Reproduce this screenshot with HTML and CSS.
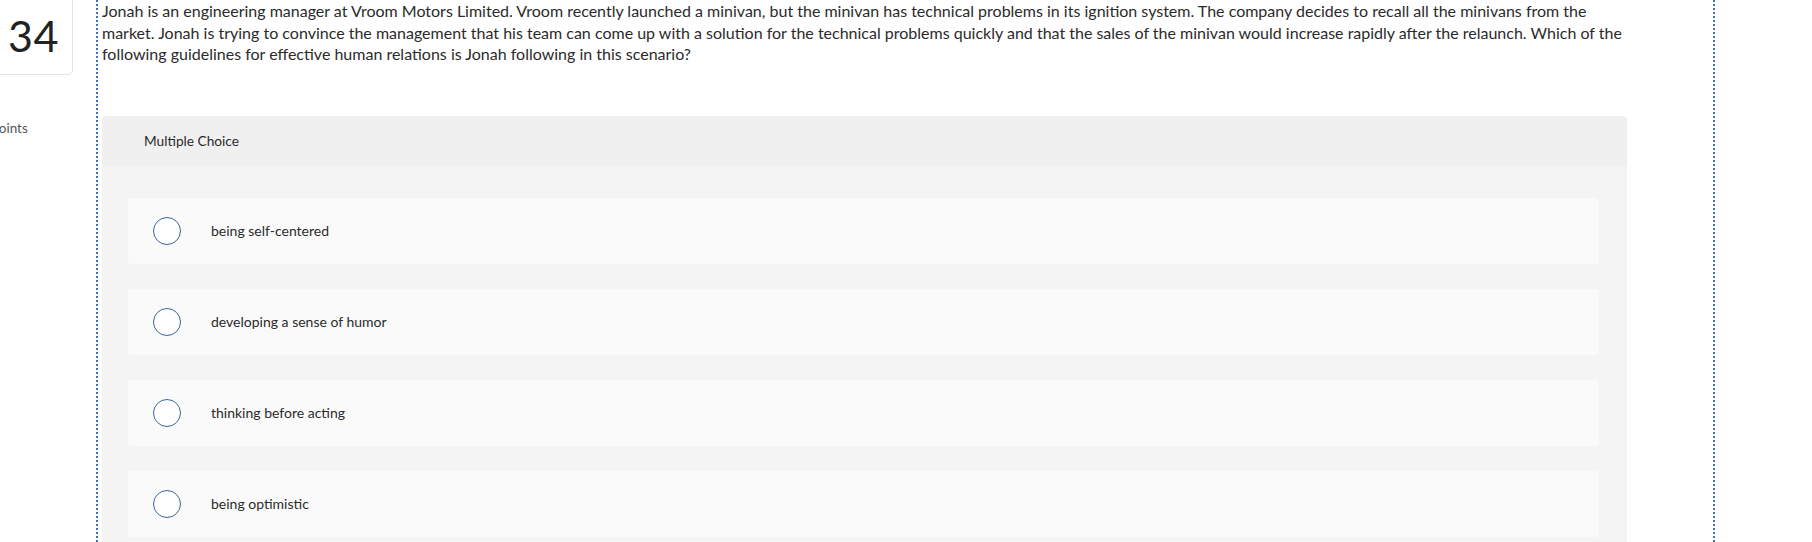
FILE: index.html
```html
<!DOCTYPE html>
<html lang="en">
<head>
<meta charset="utf-8">
<title>Question 34</title>
<link rel="stylesheet" href="styles.css">
</head>
<body>
<div class="page">
  <aside class="sidebar">
    <div class="qnum">34</div>
    <div class="points">Points</div>
  </aside>
  <main class="question">
    <p class="prompt">Jonah is an engineering manager at Vroom Motors Limited. Vroom recently launched a minivan, but the minivan has technical problems in its ignition system. The company decides to recall all the minivans from the market. Jonah is trying to convince the management that his team can come up with a solution for the technical problems quickly and that the sales of the minivan would increase rapidly after the relaunch. Which of the following guidelines for effective human relations is Jonah following in this scenario?</p>
    <section class="panel">
      <div class="panel-head">Multiple Choice</div>
      <div class="panel-body">
        <label class="option"><span class="radio"></span><span class="opt-text">being self-centered</span></label>
        <label class="option"><span class="radio"></span><span class="opt-text">developing a sense of humor</span></label>
        <label class="option"><span class="radio"></span><span class="opt-text">thinking before acting</span></label>
        <label class="option"><span class="radio"></span><span class="opt-text">being optimistic</span></label>
      </div>
    </section>
  </main>
</div>
</body>
</html>
```
FILE: styles.css
```css
* { box-sizing: border-box; }
html, body {
  margin: 0;
  padding: 0;
  background: #fff;
  overflow: hidden;
}
body {
  font-family: Lato, "Open Sans", sans-serif;
  color: #2b2b2b;
  width: 1812px;
  height: 542px;
}
.page {
  display: flex;
  align-items: flex-start;
  height: 542px;
}
.sidebar {
  flex: none;
  width: 96px;
  display: flex;
  flex-direction: column;
  overflow: hidden;
  height: 542px;
}
.qnum {
  width: 100px;
  height: 86px;
  margin-left: -27px;
  margin-top: -11px;
  border: 1px solid #e3e3e3;
  border-radius: 5px;
  font-size: 43px;
  line-height: 1;
  padding: 24px 0 0 34px;
  color: #222;
  letter-spacing: 0.5px;
}
.points {
  margin-top: 44px;
  margin-left: -9px;
  font-size: 13.5px;
  color: #555;
  line-height: 18px;
}
.question {
  flex: none;
  width: 1619px;
  height: 542px;
  border-left: 2px dotted #3b74c4;
  border-right: 2px dotted #3b74c4;
  padding-left: 4px;
}
.prompt {
  margin: 0;
  width: 1533px;
  font-size: 16px;
  line-height: 21.5px;
  color: #2b2b2b;
}
.panel {
  margin-top: 51px;
  width: 1525px;
  border-radius: 4px 4px 0 0;
  overflow: hidden;
}
.panel-head {
  height: 50px;
  background: #f0f0f0;
  padding-left: 42px;
  display: flex;
  align-items: center;
  font-size: 13.7px;
  color: #2b2b2b;
}
.panel-body {
  background: #f4f4f4;
  padding: 32px 28px 10px 26px;
  display: flex;
  flex-direction: column;
  gap: 25px;
}
.option {
  height: 66px;
  background: #fafafa;
  border-radius: 4px;
  display: flex;
  align-items: center;
  padding-left: 25px;
}
.radio {
  width: 28px;
  height: 28px;
  border: 1.5px solid #3a6696;
  border-radius: 50%;
  background: #fff;
  flex: none;
}
.opt-text {
  margin-left: 30px;
  font-size: 14px;
  color: #2b2b2b;
}
```
